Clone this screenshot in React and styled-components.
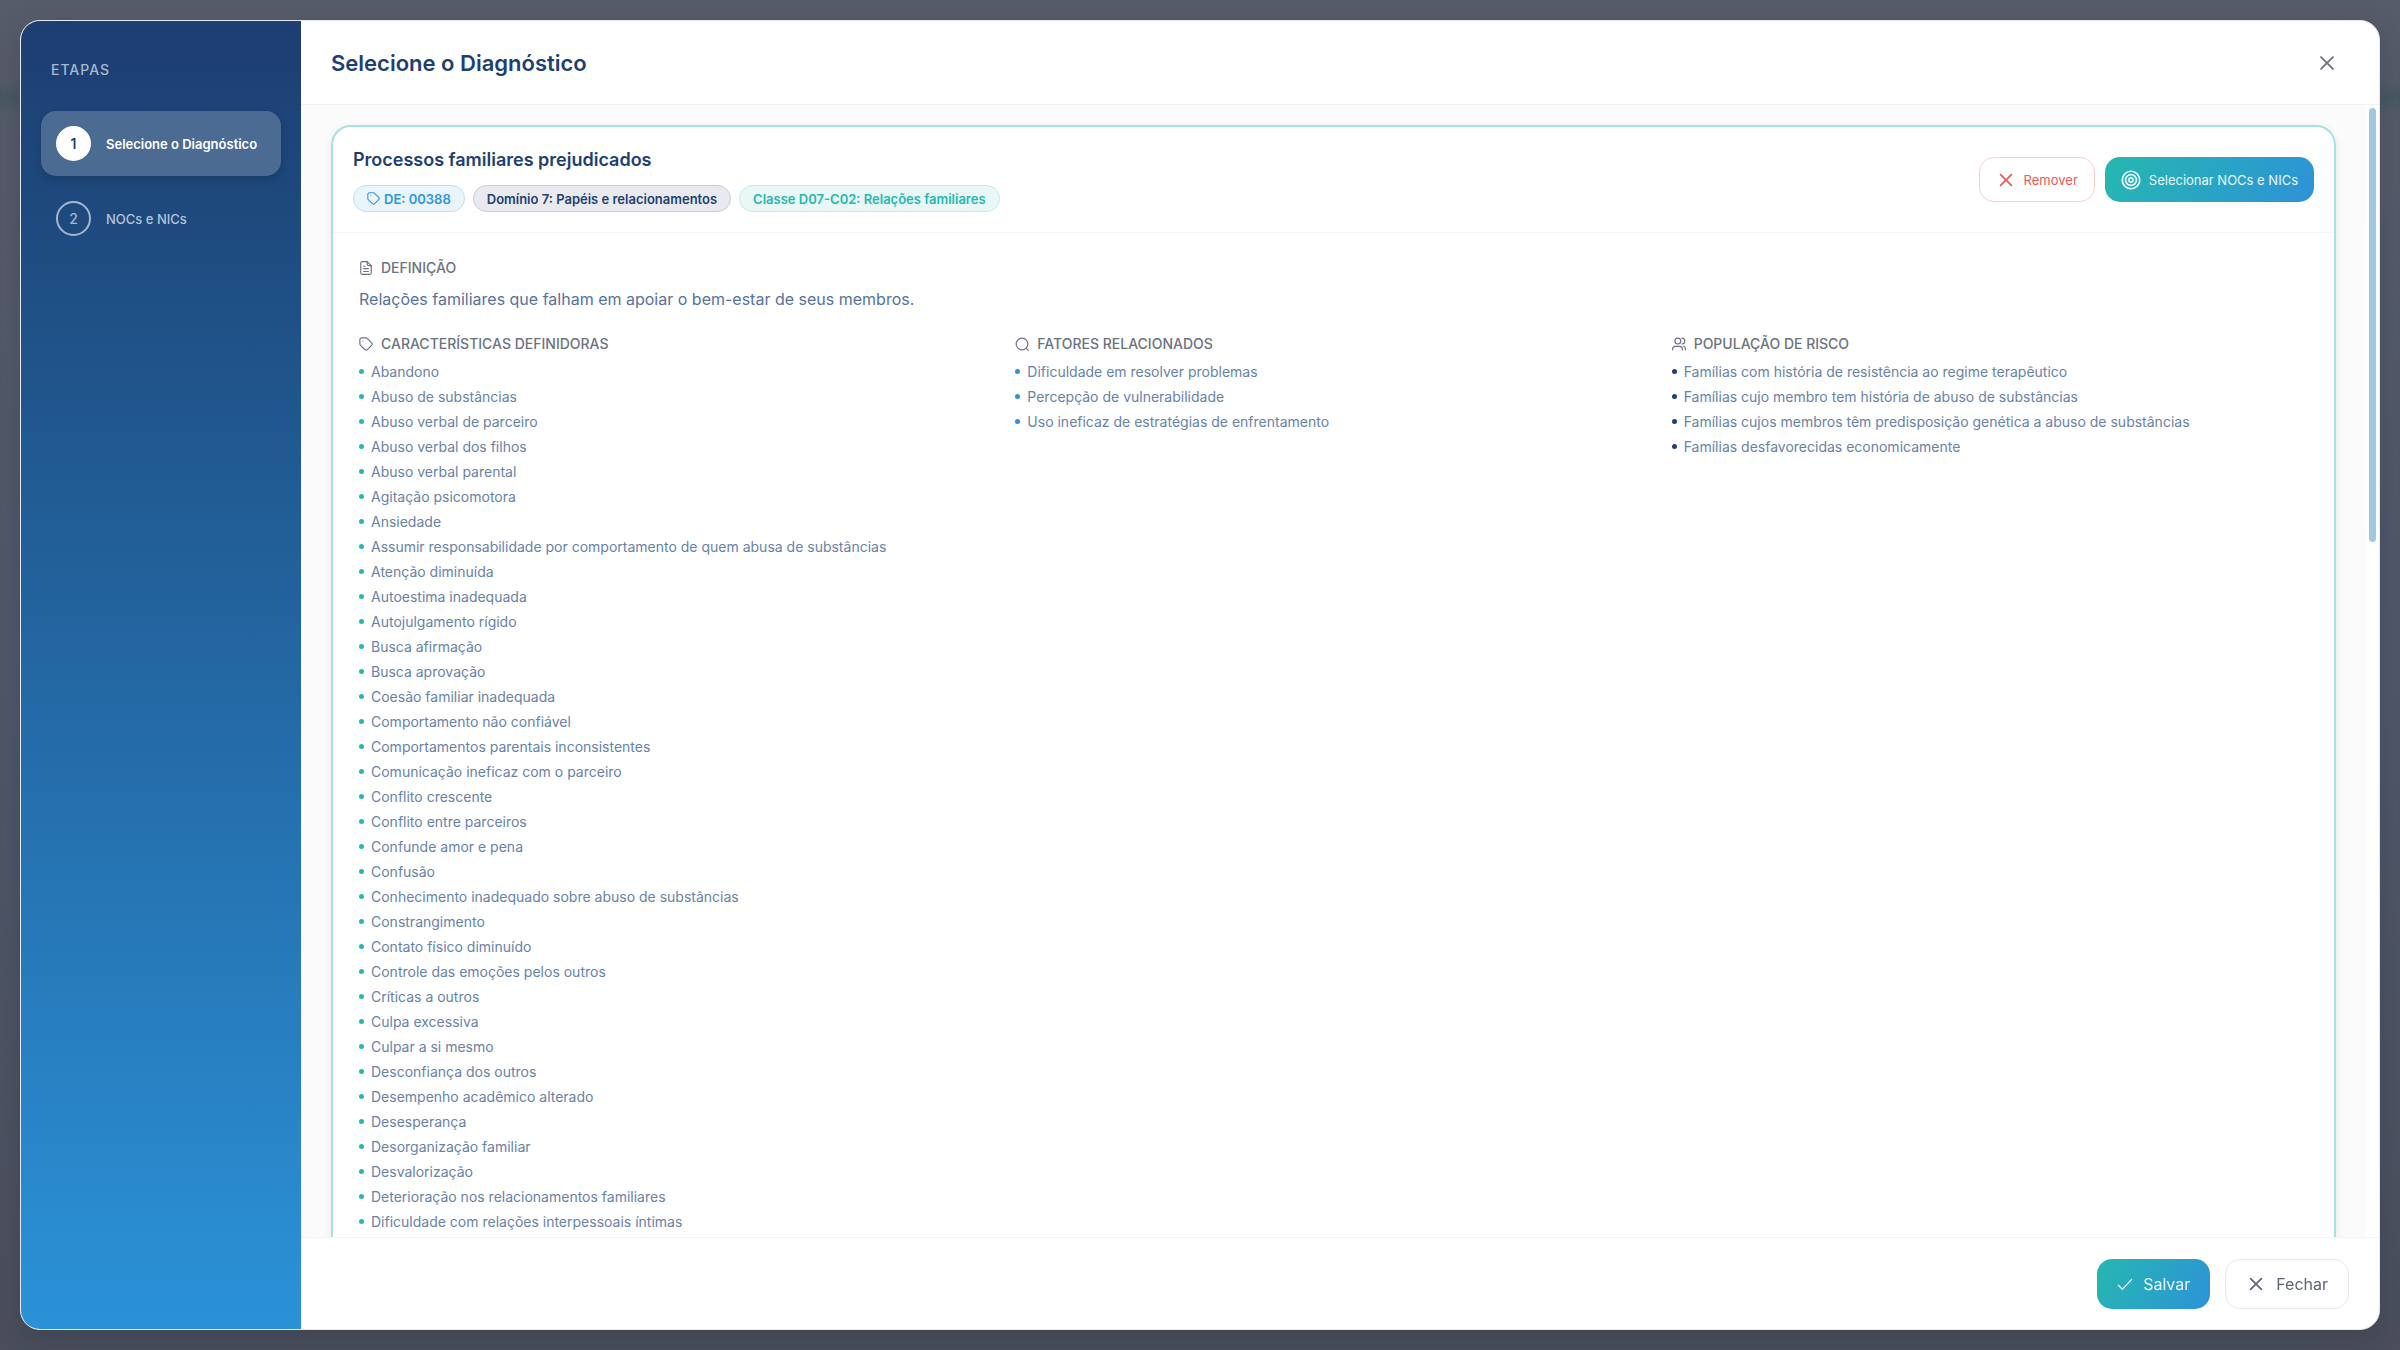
import React, { useState } from 'react'
import styled, { createGlobalStyle, css } from 'styled-components'

const GlobalStyle = createGlobalStyle`
  *, *::before, *::after {
    box-sizing: border-box;
  }
  body {
    margin: 0;
    font-family: Inter, 'Liberation Sans', sans-serif;
    color: #1e3f72;
  }
  button {
    font-family: inherit;
    cursor: pointer;
  }
  h1, h2, h3, p, ul, ol {
    margin: 0;
    padding: 0;
    font-weight: 400;
  }
  ul, ol {
    list-style: none;
  }
`

const steps = ['Selecione o Diagnóstico', 'NOCs e NICs']

const caracteristicas = [
  'Abandono',
  'Abuso de substâncias',
  'Abuso verbal de parceiro',
  'Abuso verbal dos filhos',
  'Abuso verbal parental',
  'Agitação psicomotora',
  'Ansiedade',
  'Assumir responsabilidade por comportamento de quem abusa de substâncias',
  'Atenção diminuída',
  'Autoestima inadequada',
  'Autojulgamento rígido',
  'Busca afirmação',
  'Busca aprovação',
  'Coesão familiar inadequada',
  'Comportamento não confiável',
  'Comportamentos parentais inconsistentes',
  'Comunicação ineficaz com o parceiro',
  'Conflito crescente',
  'Conflito entre parceiros',
  'Confunde amor e pena',
  'Confusão',
  'Conhecimento inadequado sobre abuso de substâncias',
  'Constrangimento',
  'Contato físico diminuído',
  'Controle das emoções pelos outros',
  'Críticas a outros',
  'Culpa excessiva',
  'Culpar a si mesmo',
  'Desconfiança dos outros',
  'Desempenho acadêmico alterado',
  'Desesperança',
  'Desorganização familiar',
  'Desvalorização',
  'Deterioração nos relacionamentos familiares',
  'Dificuldade com relações interpessoais íntimas',
]

const fatores = [
  'Dificuldade em resolver problemas',
  'Percepção de vulnerabilidade',
  'Uso ineficaz de estratégias de enfrentamento',
]

const populacao = [
  'Famílias com história de resistência ao regime terapêutico',
  'Famílias cujo membro tem história de abuso de substâncias',
  'Famílias cujos membros têm predisposição genética a abuso de substâncias',
  'Famílias desfavorecidas economicamente',
]

const Icon = ({ size = 16, stroke = 2, children }) => (
  <svg
    width={size}
    height={size}
    viewBox="0 0 24 24"
    fill="none"
    stroke="currentColor"
    strokeWidth={stroke}
    strokeLinecap="round"
    strokeLinejoin="round"
    aria-hidden="true"
  >
    {children}
  </svg>
)

const CloseIcon = (props) => (
  <Icon {...props}>
    <path d="M5.500 5.500l13 13M18.500 5.500l-13 13" />
  </Icon>
)

const CheckIcon = (props) => (
  <Icon {...props}>
    <path d="M2 14l6 6L22 5" />
  </Icon>
)

const TargetIcon = (props) => (
  <Icon {...props}>
    <circle cx="12" cy="12" r="10.500" />
    <circle cx="12" cy="12" r="6.500" />
    <circle cx="12" cy="12" r="2.500" />
  </Icon>
)

const TagIcon = (props) => (
  <Icon {...props}>
    <path d="M1.500 4.500a3 3 0 0 1 3-3h7.500a3 3 0 0 1 2 .9l7.600 7.600a3 3 0 0 1 0 4.200l-7.400 7.400a3 3 0 0 1-4.200 0L2.400 14a3 3 0 0 1-.9-2z" />
    <path d="M7 7h.01" />
  </Icon>
)

const FileIcon = (props) => (
  <Icon {...props}>
    <path d="M14 1H6a3 3 0 0 0-3 3v16a3 3 0 0 0 3 3h12a3 3 0 0 0 3-3V8z" />
    <path d="M14 1v4a3 3 0 0 0 3 3h4M8 9h2M8 13h8M8 18h8" />
  </Icon>
)

const SearchIcon = (props) => (
  <Icon {...props}>
    <circle cx="12" cy="12" r="10" />
    <path d="M19 19l4 4" />
  </Icon>
)

const UsersIcon = (props) => (
  <Icon {...props}>
    <circle cx="10" cy="7" r="5" />
    <path d="M1 22v-1a5 5 0 0 1 5-5h7a5 5 0 0 1 5 5v1M17 2a5 5 0 0 1 0 10M20 16a5 5 0 0 1 3 4v2" />
  </Icon>
)

function BulletColumn({ icon, title, items, color }) {
  return (
    <section>
      <SectionTitle>
        {icon}
        {title}
      </SectionTitle>
      <BulletList>
        {items.map((item) => (
          <Bullet key={item} $color={color}>{item}</Bullet>
        ))}
      </BulletList>
    </section>
  )
}

function App() {
  const [step, setStep] = useState(0)

  return (
    <>
      <GlobalStyle />
      <Overlay>
        <Modal role="dialog" aria-labelledby="modal-title">
          <Sidebar>
            <SidebarTitle>ETAPAS</SidebarTitle>
            <StepList>
              {steps.map((label, i) => (
                <li key={label}>
                  <StepButton type="button" $active={step === i} onClick={() => setStep(i)}>
                    <StepNumber $active={step === i}>{i + 1}</StepNumber>
                    {label}
                  </StepButton>
                </li>
              ))}
            </StepList>
          </Sidebar>

          <Main>
            <Header>
              <Title id="modal-title">Selecione o Diagnóstico</Title>
              <CloseButton type="button" aria-label="Fechar janela">
                <CloseIcon size={22} />
              </CloseButton>
            </Header>

            <Body>
              <Scroll>
                <Card>
                  <CardHeader>
                    <CardHeading>
                      <CardTitle>Processos familiares prejudicados</CardTitle>
                      <Badges>
                        <Badge $tone="blue">
                          <TagIcon size={13} />
                          DE: 00388
                        </Badge>
                        <Badge $tone="navy">Domínio 7: Papéis e relacionamentos</Badge>
                        <Badge $tone="teal">Classe D07-C02: Relações familiares</Badge>
                      </Badges>
                    </CardHeading>
                    <CardActions>
                      <Button type="button" $variant="danger">
                        <CloseIcon size={20} />
                        Remover
                      </Button>
                      <Button type="button" $variant="primary">
                        <TargetIcon size={20} />
                        Selecionar NOCs e NICs
                      </Button>
                    </CardActions>
                  </CardHeader>

                  <CardBody>
                    <section>
                      <SectionTitle>
                        <FileIcon size={14} />
                        DEFINIÇÃO
                      </SectionTitle>
                      <Definition>
                        Relações familiares que falham em apoiar o bem-estar de seus membros.
                      </Definition>
                    </section>
                    <Columns>
                      <BulletColumn
                        icon={<TagIcon size={14} />}
                        title="CARACTERÍSTICAS DEFINIDORAS"
                        items={caracteristicas}
                        color="#26b8b0"
                      />
                      <BulletColumn
                        icon={<SearchIcon size={14} />}
                        title="FATORES RELACIONADOS"
                        items={fatores}
                        color="#2d92d6"
                      />
                      <BulletColumn
                        icon={<UsersIcon size={14} />}
                        title="POPULAÇÃO DE RISCO"
                        items={populacao}
                        color="#1e3f72"
                      />
                    </Columns>
                  </CardBody>
                </Card>
              </Scroll>
              <ScrollTrack>
                <ScrollThumb />
              </ScrollTrack>
            </Body>

            <Footer>
              <Button type="button" $variant="primary" $large>
                <CheckIcon size={16} />
                Salvar
              </Button>
              <Button type="button" $variant="neutral" $large>
                <CloseIcon size={20} />
                Fechar
              </Button>
            </Footer>
          </Main>
        </Modal>
      </Overlay>
    </>
  )
}

export default App

const Overlay = styled.div`
  display: flex;
  height: 100vh;
  padding: 20px;
  background:
    linear-gradient(transparent 80px, #465962 98px, transparent 116px),
    linear-gradient(#575c69, #50586a 50%, #4b4f5c);
`

const Modal = styled.div`
  display: flex;
  flex: 1;
  min-width: 0;
  overflow: hidden;
  border: 1px solid #e4e8f0;
  border-radius: 20px;
  background: #fff;
  box-shadow: 0 10px 30px rgba(30, 35, 50, 0.25);
`

const Sidebar = styled.aside`
  flex: 0 0 280px;
  padding: 36px 20px;
  background: linear-gradient(#1d3e72, #1e4a7e 15%, #2b92d8);
`

const SidebarTitle = styled.h2`
  padding: 0 10px;
  margin-bottom: 28px;
  font-size: 14px;
  line-height: 26px;
  letter-spacing: 1px;
  font-weight: 500;
  color: #a9b9cf;
`

const StepList = styled.ol`
  display: flex;
  flex-direction: column;
  gap: 10px;
`

const StepButton = styled.button`
  display: flex;
  align-items: center;
  gap: 15px;
  width: 100%;
  height: 65px;
  padding: 0 15px;
  border: 0;
  border-radius: 15px;
  background: transparent;
  font-size: 13px;
  font-weight: 500;
  white-space: nowrap;
  color: #b4c5d8;
  ${({ $active }) =>
    $active &&
    css`
      background: #4b6b93;
      color: #fff;
      font-weight: 600;
      box-shadow: 0 4px 8px rgba(0, 0, 0, 0.15);
    `}
`

const StepNumber = styled.span`
  display: flex;
  align-items: center;
  justify-content: center;
  width: 35px;
  height: 35px;
  border: 2px solid ${({ $active }) => ($active ? '#fff' : '#a5b8cf')};
  border-radius: 50%;
  background: ${({ $active }) => ($active ? '#fff' : 'transparent')};
  color: ${({ $active }) => ($active ? '#1e3f72' : '#a5b8cf')};
  font-size: 14px;
`

const Main = styled.main`
  display: flex;
  flex: 1;
  flex-direction: column;
  min-width: 0;
`

const Header = styled.header`
  display: flex;
  align-items: center;
  justify-content: space-between;
  height: 84px;
  padding: 0 36px 0 30px;
  border-bottom: 1px solid #f1f2f4;
`

const Title = styled.h1`
  font-size: 22px;
  line-height: 32px;
  font-weight: 600;
`

const CloseButton = styled.button`
  display: flex;
  padding: 5px;
  border: 0;
  background: none;
  color: #6b7280;
`

const Body = styled.div`
  display: flex;
  flex: 1;
  min-height: 0;
`

const Scroll = styled.div`
  flex: 1;
  min-width: 0;
  padding: 20px 30px;
  overflow-y: auto;
  scrollbar-width: none;
  background: #fbfbfb;
`

const ScrollTrack = styled.div`
  width: 13px;
  padding: 3px;
`

const ScrollThumb = styled.div`
  height: 434px;
  border-radius: 4px;
  background: #a0c8e2;
`

const Card = styled.article`
  border: 2px solid #a5e3e0;
  border-radius: 20px;
  background: #fff;
  box-shadow: 0 2px 8px rgba(0, 0, 0, 0.08);
`

const CardHeader = styled.div`
  display: flex;
  align-items: center;
  justify-content: space-between;
  padding: 20px;
  border-bottom: 1px solid #f5f6f7;
`

const CardHeading = styled.div`
  display: flex;
  flex-direction: column;
  gap: 12px;
`

const CardTitle = styled.h2`
  font-size: 18px;
  line-height: 26px;
  font-weight: 600;
`

const Badges = styled.div`
  display: flex;
  gap: 8px;
`

const badgeTones = {
  blue: css`
    background: #e9f4fb;
    border-color: #c0def3;
    color: #2f97de;
  `,
  navy: css`
    background: #e8eaf0;
    border-color: #c6cbd9;
    color: #1e3f72;
  `,
  teal: css`
    background: #e9f7f6;
    border-color: #c0ebe8;
    color: #26b8b0;
  `,
}

const Badge = styled.span`
  display: flex;
  align-items: center;
  gap: 4px;
  height: 27px;
  padding: 0 13px;
  border: 1px solid;
  border-radius: 14px;
  font-size: 13px;
  font-weight: 600;
  ${({ $tone }) => badgeTones[$tone]}
`

const CardActions = styled.div`
  display: flex;
  gap: 10px;
`

const buttonVariants = {
  primary: css`
    border: 0;
    background: linear-gradient(120deg, #26b8b0, #2d92d8);
    color: #e9f7fb;
  `,
  danger: css`
    border: 1px solid #fbcfcf;
    background: #fff;
    color: #ef5656;
  `,
  neutral: css`
    border: 1px solid #e5e7ee;
    background: #fff;
    color: #5d6573;
  `,
}

const Button = styled.button`
  display: flex;
  align-items: center;
  gap: ${({ $large }) => ($large ? 10 : 8)}px;
  height: ${({ $large }) => ($large ? 50 : 45)}px;
  padding: 0 ${({ $large }) => ($large ? 20 : 16)}px;
  border-radius: 15px;
  font-size: ${({ $large }) => ($large ? 16 : 13)}px;
  ${({ $variant }) => buttonVariants[$variant]}
`

const CardBody = styled.div`
  display: flex;
  flex-direction: column;
  gap: 22px;
  padding: 24px 26px;
`

const SectionTitle = styled.h3`
  display: flex;
  align-items: center;
  gap: 8px;
  font-size: 14px;
  line-height: 22px;
  font-weight: 500;
  color: #6b7280;
`

const Definition = styled.p`
  margin-top: 8px;
  font-size: 16px;
  line-height: 24px;
  color: #55739c;
`

const Columns = styled.div`
  display: grid;
  grid-template-columns: repeat(3, 1fr);
  gap: 20px;
`

const BulletList = styled.ul`
  margin-top: 4px;
`

const Bullet = styled.li`
  display: flex;
  align-items: center;
  gap: 7px;
  font-size: 14px;
  line-height: 25px;
  color: #6882a8;

  &::before {
    content: '';
    width: 5px;
    height: 5px;
    border-radius: 50%;
    background: ${({ $color }) => $color};
  }
`

const Footer = styled.footer`
  display: flex;
  align-items: center;
  justify-content: flex-end;
  gap: 15px;
  height: 92px;
  padding: 0 30px;
  border-top: 1px solid #f3f4f6;
`
